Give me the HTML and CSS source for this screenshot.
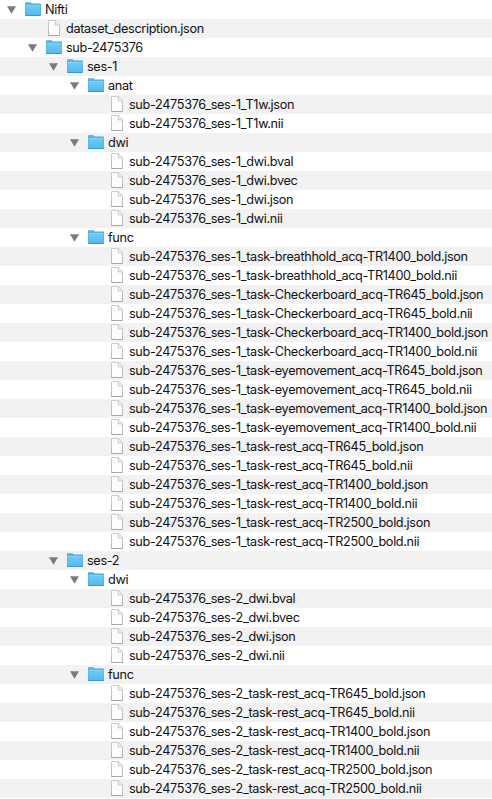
FILE: index.html
```html
<!DOCTYPE html>
<html lang="en">
<head>
<meta charset="utf-8">
<title>Nifti</title>
<link rel="stylesheet" href="styles.css">
</head>
<body>
<svg class="defs" aria-hidden="true">
  <defs>
    <linearGradient id="blue" x1="0" y1="0" x2="0" y2="1">
      <stop offset="0" stop-color="#6fcaf6"/>
      <stop offset="1" stop-color="#55b9ef"/>
    </linearGradient>
    <linearGradient id="paper" x1="0" y1="0" x2="0" y2="1">
      <stop offset="0" stop-color="#c9c9c9"/>
      <stop offset="1" stop-color="#adadad"/>
    </linearGradient>
  </defs>
  <symbol id="folder" viewBox="0 0 16 14">
    <path d="M0 1.3Q0 .2 1 .2H5Q5.6.2 6 .8L6.6 1.5H15Q16 1.5 16 2.5V13Q16 14 15 14H1Q0 14 0 13Z" fill="#43a5da"/>
    <path d="M.6 1.5Q.6.9 1.2.9H4.9L5.9 2.2H14.8Q15.4 2.2 15.4 2.8V3.2H.6Z" fill="#55b9e8"/>
    <path d="M.4 3.5H15.6V13H.4Z" fill="url(#blue)"/>
    <path d="M.4 3.5H15.6" stroke="#8bd8fb" stroke-width=".8"/>
    <path d="M.5 13.5H15.5" stroke="#3798ca" stroke-width="1"/>
  </symbol>
  <symbol id="file" viewBox="0 0 12 16">
    <path d="M.5.5H7.5L11.5 4.7V15.5H.5Z" fill="#fdfdfd" stroke="url(#paper)" stroke-width=".9"/>
    <path d="M7.3.7V4.9H11.3" fill="#f3f3f3" stroke="#bdbdbd" stroke-width=".8"/>
    <path d="M.5 15.5H11.5" stroke="#a5a5a5" stroke-width=".9"/>
  </symbol>
  <symbol id="arrow" viewBox="0 0 9 8">
    <path d="M0 .2H9L4.5 7.8Z" fill="#7b7b7b"/>
  </symbol>
</svg>
<main class="tree">
  <div class="row d0"><svg class="arrow"><use href="#arrow"/></svg><svg class="folder"><use href="#folder"/></svg><span>Nifti</span></div>
  <div class="row d1"><svg class="file"><use href="#file"/></svg><span>dataset_description.json</span></div>
  <div class="row d1"><svg class="arrow"><use href="#arrow"/></svg><svg class="folder"><use href="#folder"/></svg><span>sub-2475376</span></div>
  <div class="row d2"><svg class="arrow"><use href="#arrow"/></svg><svg class="folder"><use href="#folder"/></svg><span>ses-1</span></div>
  <div class="row d3"><svg class="arrow"><use href="#arrow"/></svg><svg class="folder"><use href="#folder"/></svg><span>anat</span></div>
  <div class="row d4"><svg class="file"><use href="#file"/></svg><span>sub-2475376_ses-1_T1w.json</span></div>
  <div class="row d4"><svg class="file"><use href="#file"/></svg><span>sub-2475376_ses-1_T1w.nii</span></div>
  <div class="row d3"><svg class="arrow"><use href="#arrow"/></svg><svg class="folder"><use href="#folder"/></svg><span>dwi</span></div>
  <div class="row d4"><svg class="file"><use href="#file"/></svg><span>sub-2475376_ses-1_dwi.bval</span></div>
  <div class="row d4"><svg class="file"><use href="#file"/></svg><span>sub-2475376_ses-1_dwi.bvec</span></div>
  <div class="row d4"><svg class="file"><use href="#file"/></svg><span>sub-2475376_ses-1_dwi.json</span></div>
  <div class="row d4"><svg class="file"><use href="#file"/></svg><span>sub-2475376_ses-1_dwi.nii</span></div>
  <div class="row d3"><svg class="arrow"><use href="#arrow"/></svg><svg class="folder"><use href="#folder"/></svg><span>func</span></div>
  <div class="row d4"><svg class="file"><use href="#file"/></svg><span>sub-2475376_ses-1_task-breathhold_acq-TR1400_bold.json</span></div>
  <div class="row d4"><svg class="file"><use href="#file"/></svg><span>sub-2475376_ses-1_task-breathhold_acq-TR1400_bold.nii</span></div>
  <div class="row d4"><svg class="file"><use href="#file"/></svg><span>sub-2475376_ses-1_task-Checkerboard_acq-TR645_bold.json</span></div>
  <div class="row d4"><svg class="file"><use href="#file"/></svg><span>sub-2475376_ses-1_task-Checkerboard_acq-TR645_bold.nii</span></div>
  <div class="row d4"><svg class="file"><use href="#file"/></svg><span>sub-2475376_ses-1_task-Checkerboard_acq-TR1400_bold.json</span></div>
  <div class="row d4"><svg class="file"><use href="#file"/></svg><span>sub-2475376_ses-1_task-Checkerboard_acq-TR1400_bold.nii</span></div>
  <div class="row d4"><svg class="file"><use href="#file"/></svg><span>sub-2475376_ses-1_task-eyemovement_acq-TR645_bold.json</span></div>
  <div class="row d4"><svg class="file"><use href="#file"/></svg><span>sub-2475376_ses-1_task-eyemovement_acq-TR645_bold.nii</span></div>
  <div class="row d4"><svg class="file"><use href="#file"/></svg><span>sub-2475376_ses-1_task-eyemovement_acq-TR1400_bold.json</span></div>
  <div class="row d4"><svg class="file"><use href="#file"/></svg><span>sub-2475376_ses-1_task-eyemovement_acq-TR1400_bold.nii</span></div>
  <div class="row d4"><svg class="file"><use href="#file"/></svg><span>sub-2475376_ses-1_task-rest_acq-TR645_bold.json</span></div>
  <div class="row d4"><svg class="file"><use href="#file"/></svg><span>sub-2475376_ses-1_task-rest_acq-TR645_bold.nii</span></div>
  <div class="row d4"><svg class="file"><use href="#file"/></svg><span>sub-2475376_ses-1_task-rest_acq-TR1400_bold.json</span></div>
  <div class="row d4"><svg class="file"><use href="#file"/></svg><span>sub-2475376_ses-1_task-rest_acq-TR1400_bold.nii</span></div>
  <div class="row d4"><svg class="file"><use href="#file"/></svg><span>sub-2475376_ses-1_task-rest_acq-TR2500_bold.json</span></div>
  <div class="row d4"><svg class="file"><use href="#file"/></svg><span>sub-2475376_ses-1_task-rest_acq-TR2500_bold.nii</span></div>
  <div class="row d2"><svg class="arrow"><use href="#arrow"/></svg><svg class="folder"><use href="#folder"/></svg><span>ses-2</span></div>
  <div class="row d3"><svg class="arrow"><use href="#arrow"/></svg><svg class="folder"><use href="#folder"/></svg><span>dwi</span></div>
  <div class="row d4"><svg class="file"><use href="#file"/></svg><span>sub-2475376_ses-2_dwi.bval</span></div>
  <div class="row d4"><svg class="file"><use href="#file"/></svg><span>sub-2475376_ses-2_dwi.bvec</span></div>
  <div class="row d4"><svg class="file"><use href="#file"/></svg><span>sub-2475376_ses-2_dwi.json</span></div>
  <div class="row d4"><svg class="file"><use href="#file"/></svg><span>sub-2475376_ses-2_dwi.nii</span></div>
  <div class="row d3"><svg class="arrow"><use href="#arrow"/></svg><svg class="folder"><use href="#folder"/></svg><span>func</span></div>
  <div class="row d4"><svg class="file"><use href="#file"/></svg><span>sub-2475376_ses-2_task-rest_acq-TR645_bold.json</span></div>
  <div class="row d4"><svg class="file"><use href="#file"/></svg><span>sub-2475376_ses-2_task-rest_acq-TR645_bold.nii</span></div>
  <div class="row d4"><svg class="file"><use href="#file"/></svg><span>sub-2475376_ses-2_task-rest_acq-TR1400_bold.json</span></div>
  <div class="row d4"><svg class="file"><use href="#file"/></svg><span>sub-2475376_ses-2_task-rest_acq-TR1400_bold.nii</span></div>
  <div class="row d4"><svg class="file"><use href="#file"/></svg><span>sub-2475376_ses-2_task-rest_acq-TR2500_bold.json</span></div>
  <div class="row d4"><svg class="file"><use href="#file"/></svg><span>sub-2475376_ses-2_task-rest_acq-TR2500_bold.nii</span></div>
</main>
</body>
</html>
```
FILE: styles.css
```css
body {
  margin: 0;
  background: #fff;
  color: #111;
  font: 12.7px/19px Inter, "Liberation Sans", sans-serif;
  letter-spacing: -0.34px;
}
.defs { display: block; width: 0; height: 0; }
.tree { overflow: hidden; }
.row {
  display: flex;
  height: 19px;
  white-space: nowrap;
}
.row:nth-child(even) { background: #f2f2f2; }
.row svg { flex: none; }
.d1 { padding-left: 21px; }
.d2 { padding-left: 42px; }
.d3 { padding-left: 63px; }
.d4 { padding-left: 84px; }
.arrow { width: 9px; height: 8px; margin: 6px 9px 0 7px; }
.folder { width: 16px; height: 14px; margin: 2px 4px 0 0; }
.file { width: 12px; height: 16px; margin: 1px 6px 0 27px; }
```
